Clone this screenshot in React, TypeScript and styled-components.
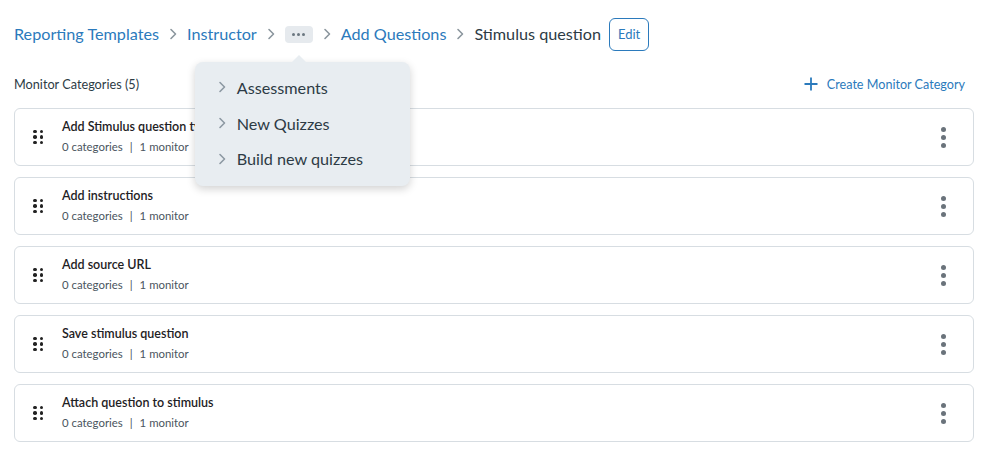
import React from "react";
import styled, { createGlobalStyle } from "styled-components";

const GlobalStyle = createGlobalStyle`
  html, body {
    margin: 0;
    padding: 0;
    background: #ffffff;
    font-family: Lato, "Noto Sans", sans-serif;
    color: #2d3b45;
  }
`;

const Page = styled.div`
  width: 998px;
  height: 457px;
  box-sizing: border-box;
  padding: 17px 24px 0 14px;
  position: relative;
  overflow: hidden;
`;

const Breadcrumbs = styled.nav`
  display: flex;
  align-items: center;
  height: 34px;
  font-size: 16.2px;
`;

const Crumb = styled.a`
  color: #2b7abc;
  text-decoration: none;
  line-height: 1;
`;

const Current = styled.span`
  color: #2d3b45;
  line-height: 1;
`;

const Sep = styled.span`
  display: inline-flex;
  width: 28px;
  justify-content: center;
  color: #8b969e;
`;

const EllipsisWrap = styled.span`
  position: relative;
  display: inline-flex;
`;

const EllipsisButton = styled.button`
  width: 28px;
  height: 17px;
  border: none;
  border-radius: 4px;
  background: #e6eaee;
  display: inline-flex;
  align-items: center;
  justify-content: center;
  gap: 2px;
  padding: 0;
  & span {
    width: 3px;
    height: 3px;
    border-radius: 50%;
    background: #6b7780;
  }
`;

const Menu = styled.div`
  position: absolute;
  top: 36px;
  left: -90px;
  width: 215px;
  height: 124px;
  box-sizing: border-box;
  background: #e8edf1;
  border-radius: 8px;
  box-shadow: 0 3px 8px rgba(0, 0, 0, 0.18);
  padding: 8px 0 0 21px;
  z-index: 5;
  &::before {
    content: "";
    position: absolute;
    top: -7px;
    left: 97px;
    border-left: 7px solid transparent;
    border-right: 7px solid transparent;
    border-bottom: 7px solid #e8edf1;
  }
`;

const MenuItem = styled.div`
  display: flex;
  align-items: center;
  height: 35.7px;
  font-size: 16.2px;
  color: #2d3b45;
  gap: 9px;
`;

const EditButton = styled.button`
  margin-left: 8px;
  height: 33px;
  padding: 0 8px;
  border: 1px solid #2b7abc;
  border-radius: 6px;
  background: #fff;
  color: #2b7abc;
  font-family: Lato, sans-serif;
  font-size: 13px;
`;

const HeaderRow = styled.div`
  display: flex;
  justify-content: space-between;
  align-items: center;
  margin-top: 23px;
  height: 20px;
`;

const SectionTitle = styled.h2`
  margin: 0;
  font-size: 12.7px;
  font-weight: 400;
  color: #2d3b45;
`;

const CreateLink = styled.a`
  display: flex;
  align-items: center;
  gap: 9px;
  color: #2b7abc;
  font-size: 12.6px;
  margin-right: 9px;
`;

const List = styled.div`
  display: flex;
  flex-direction: column;
  gap: 11px;
  margin-top: 14px;
`;

const Card = styled.div`
  display: flex;
  align-items: center;
  height: 58px;
  box-sizing: border-box;
  border: 1px solid #d7dde2;
  border-radius: 6px;
  padding: 0 27px 3px 18px;
`;

const Handle = styled.div`
  display: grid;
  grid-template-columns: 3.5px 3.5px;
  gap: 2px 3px;
  margin: 3px 19px 0 0;
  & span {
    width: 3.5px;
    height: 3.5px;
    border-radius: 50%;
    background: #222;
  }
`;

const Info = styled.div`
  flex: 1;
  display: flex;
  flex-direction: column;
  gap: 6px;
`;

const Title = styled.div`
  font-size: 12.5px;
  font-weight: 600;
  color: #1e2124;
`;

const Meta = styled.div`
  font-size: 11.4px;
  color: #4a555e;
  & b {
    font-weight: 400;
    margin: 0 7px;
  }
`;

const Kebab = styled.div`
  display: flex;
  flex-direction: column;
  gap: 3px;
  margin-top: 3px;
  & span {
    width: 5px;
    height: 5px;
    border-radius: 50%;
    background: #6a737b;
  }
`;

const Chevron = ({ color = "#8b969e", size = 12 }: { color?: string; size?: number }) => (
  <svg width={size} height={size} viewBox="0 0 12 12" fill="none">
    <path d="M4 1.5 L8.5 6 L4 10.5" stroke={color} strokeWidth="1.6" strokeLinecap="round" strokeLinejoin="round" />
  </svg>
);

const items = [
  "Add Stimulus question type",
  "Add instructions",
  "Add source URL",
  "Save stimulus question",
  "Attach question to stimulus",
];

export default function App() {
  return (
    <>
      <GlobalStyle />
      <Page>
        <Breadcrumbs>
          <Crumb>Reporting Templates</Crumb>
          <Sep><Chevron /></Sep>
          <Crumb>Instructor</Crumb>
          <Sep><Chevron /></Sep>
          <EllipsisWrap>
            <EllipsisButton>
              <span />
              <span />
              <span />
            </EllipsisButton>
            <Menu>
              {["Assessments", "New Quizzes", "Build new quizzes"].map((m) => (
                <MenuItem key={m}>
                  <Chevron color="#8d99a3" size={12} />
                  {m}
                </MenuItem>
              ))}
            </Menu>
          </EllipsisWrap>
          <Sep><Chevron /></Sep>
          <Crumb>Add Questions</Crumb>
          <Sep><Chevron /></Sep>
          <Current>Stimulus question</Current>
          <EditButton>Edit</EditButton>
        </Breadcrumbs>
        <HeaderRow>
          <SectionTitle>Monitor Categories (5)</SectionTitle>
          <CreateLink>
            <svg width="14" height="14" viewBox="0 0 14 14">
              <path d="M7 0.5 V13.5 M0.5 7 H13.5" stroke="#2b7abc" strokeWidth="1.8" />
            </svg>
            Create Monitor Category
          </CreateLink>
        </HeaderRow>
        <List>
          {items.map((t) => (
            <Card key={t}>
              <Handle>
                {Array.from({ length: 6 }).map((_, i) => (
                  <span key={i} />
                ))}
              </Handle>
              <Info>
                <Title>{t}</Title>
                <Meta>
                  0 categories<b>|</b>1 monitor
                </Meta>
              </Info>
              <Kebab>
                <span />
                <span />
                <span />
              </Kebab>
            </Card>
          ))}
        </List>
      </Page>
    </>
  );
}
